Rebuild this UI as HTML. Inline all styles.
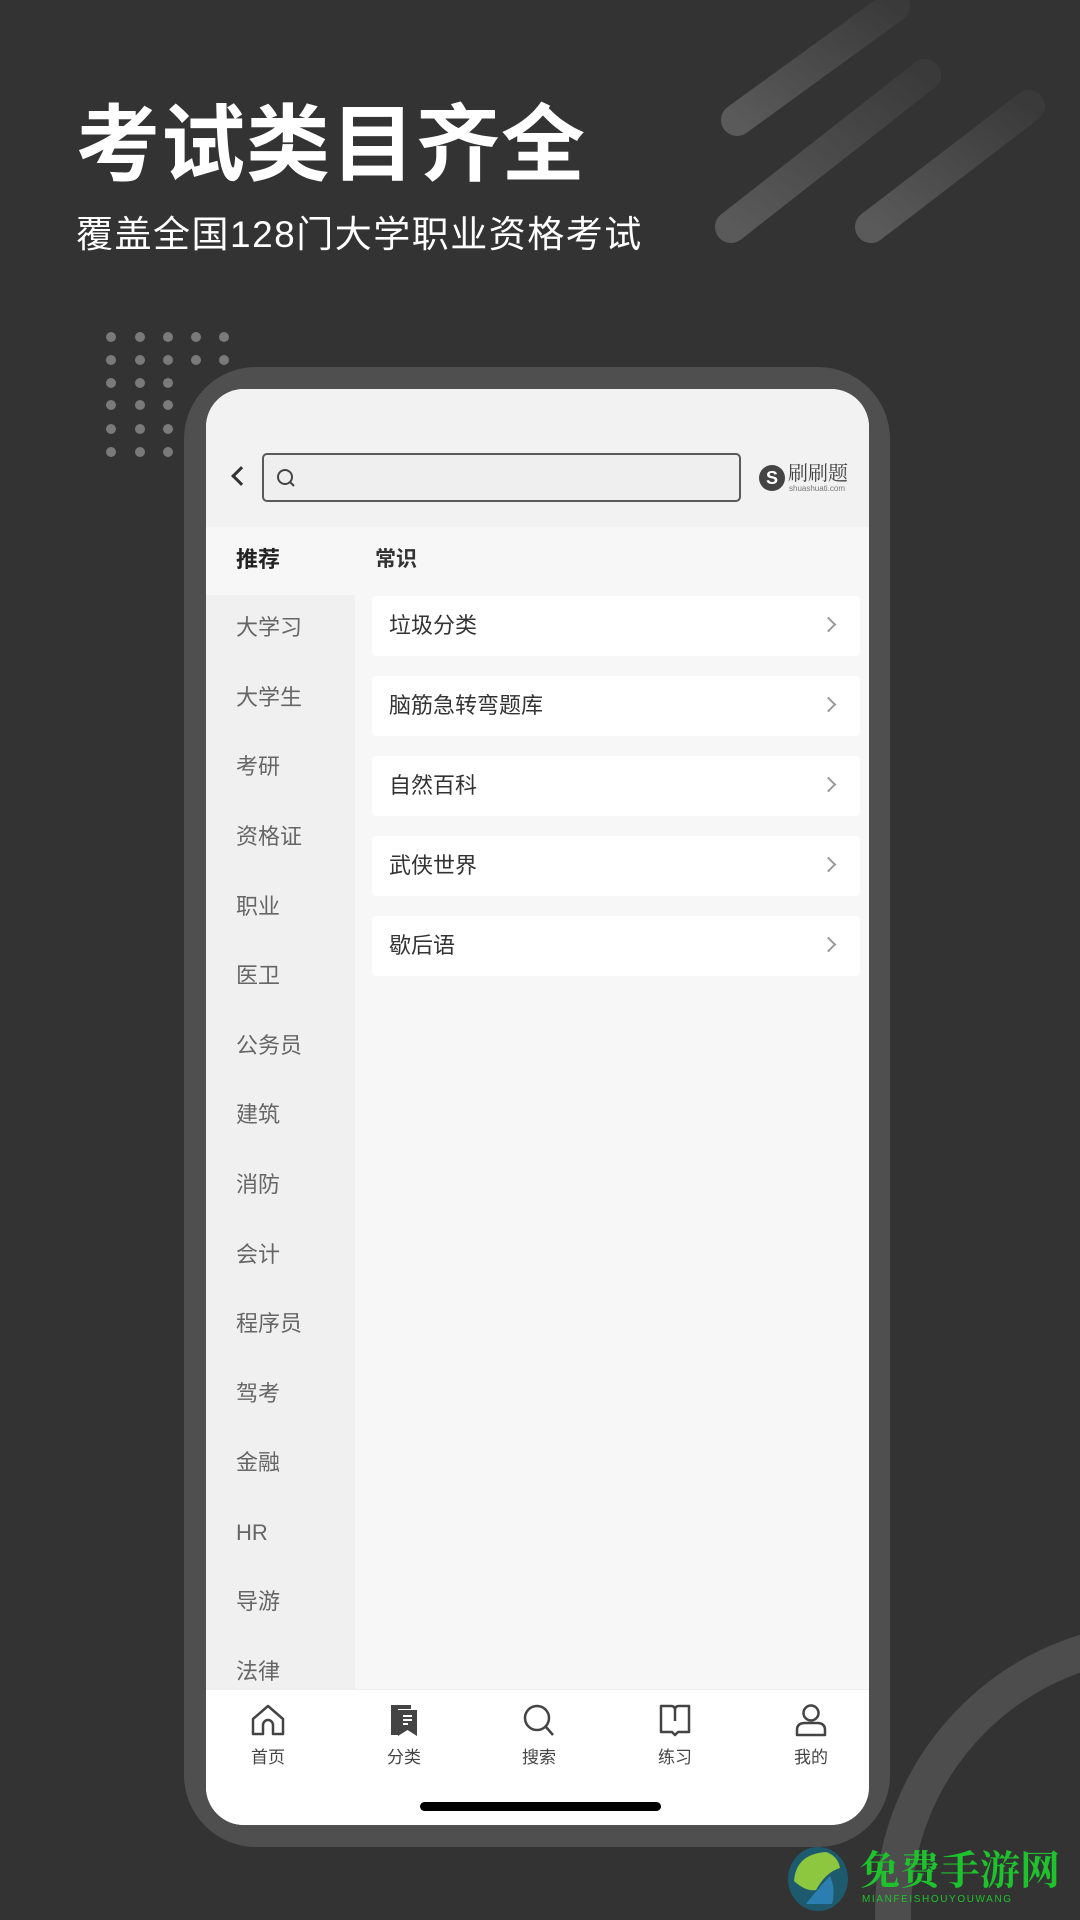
<!DOCTYPE html>
<html><head><meta charset="utf-8"><style>
*{margin:0;padding:0;box-sizing:border-box}
html,body{width:1080px;height:1920px;overflow:hidden}
body{background:#333;position:relative;font-family:"Liberation Sans","Noto Sans CJK SC",sans-serif}
.a{position:absolute}
.dot{position:absolute;width:10px;height:10px;border-radius:50%;background:#7a7a7a}
.side{position:absolute;left:30px;font-size:22px;color:#666;line-height:30px}
.card{position:absolute;left:166px;width:488px;height:60px;background:#fff;border-radius:4px}
.card span{position:absolute;left:17px;top:15px;font-size:22px;color:#333;line-height:30px}
.card i{position:absolute;right:26px;top:23px;width:11px;height:11px;border-top:2px solid #999;border-right:2px solid #999;transform:rotate(45deg)}
.tab{position:absolute;top:1703px;width:80px;margin-left:-40px;text-align:center;font-size:17px;color:#444}
.tab svg{display:block;margin:0 auto 6px}
</style></head><body>
<svg class="a" style="left:0;top:0" width="1080" height="1920">
<defs><linearGradient id="g" x1="0" y1="1" x2="1" y2="0"><stop offset="0" stop-color="#5a5a5a"/><stop offset="1" stop-color="#3a3a3a"/></linearGradient></defs>
<g stroke="url(#g)" stroke-width="32" stroke-linecap="round">
<line x1="737" y1="120" x2="894" y2="6"/>
<line x1="731" y1="227" x2="925" y2="75"/>
<line x1="871" y1="227" x2="1029" y2="106"/>
</g>
<circle cx="1165" cy="1912" r="272" fill="none" stroke="#4d4d4d" stroke-width="36"/>
</svg>
<div class="a" style="left:76px;top:100px;font-size:84px;font-weight:bold;color:#fff;line-height:90px;letter-spacing:1px">考试类目齐全</div>
<div class="a" style="left:76px;top:214px;font-size:37px;color:#fff;line-height:42px;letter-spacing:1.5px">覆盖全国128门大学职业资格考试</div>
<div class="dot" style="left:106px;top:332px"></div><div class="dot" style="left:135px;top:332px"></div><div class="dot" style="left:163px;top:332px"></div><div class="dot" style="left:191px;top:332px"></div><div class="dot" style="left:219px;top:332px"></div>
<div class="dot" style="left:106px;top:355px"></div><div class="dot" style="left:135px;top:355px"></div><div class="dot" style="left:163px;top:355px"></div><div class="dot" style="left:191px;top:355px"></div><div class="dot" style="left:219px;top:355px"></div>
<div class="dot" style="left:106px;top:378px"></div><div class="dot" style="left:135px;top:378px"></div><div class="dot" style="left:163px;top:378px"></div>
<div class="dot" style="left:106px;top:400px"></div><div class="dot" style="left:135px;top:400px"></div><div class="dot" style="left:163px;top:400px"></div>
<div class="dot" style="left:106px;top:424px"></div><div class="dot" style="left:135px;top:424px"></div><div class="dot" style="left:163px;top:424px"></div>
<div class="dot" style="left:106px;top:447px"></div><div class="dot" style="left:135px;top:447px"></div><div class="dot" style="left:163px;top:447px"></div>

<div class="a" style="left:184px;top:367px;width:706px;height:1480px;background:#4f4f4f;border-radius:72px"></div>
<div class="a" style="left:206px;top:389px;width:663px;height:1436px;background:#f7f7f7;border-radius:38px;overflow:hidden">
  <div class="a" style="left:0;top:0;width:663px;height:138px;background:#f2f2f2"></div>
  <div class="a" style="left:28px;top:80px;width:14px;height:14px;border-left:3px solid #333;border-bottom:3px solid #333;transform:rotate(45deg)"></div>
  <div class="a" style="left:56px;top:64px;width:479px;height:49px;border:2px solid #5a5a5a;border-radius:5px;background:#efefef"></div>
  <svg class="a" style="left:69px;top:78px" width="22" height="22"><circle cx="10" cy="10" r="7" fill="none" stroke="#444" stroke-width="2"/><line x1="15" y1="15" x2="19" y2="19" stroke="#444" stroke-width="2"/></svg>
  <div class="a" style="left:553px;top:76px;width:26px;height:26px;border-radius:50%;background:#444;color:#fff;font-size:18px;font-weight:bold;text-align:center;line-height:26px">S</div>
  <div class="a" style="left:582px;top:71px;font-size:20px;color:#444;font-family:'Noto Serif CJK SC',serif;line-height:24px">刷刷题</div>
  <div class="a" style="left:583px;top:95px;font-size:8px;color:#777">shuashuati.com</div>

  <div class="a" style="left:0;top:138px;width:149px;height:1298px;background:#f0f0f0"></div>
  <div class="a" style="left:0;top:138px;width:149px;height:68px;background:#f7f7f7"></div>
  <div class="side" style="top:156px;color:#222;font-weight:bold">推荐</div>
  <div class="side" style="top:224px">大学习</div>
  <div class="side" style="top:294px">大学生</div>
  <div class="side" style="top:363px">考研</div>
  <div class="side" style="top:433px">资格证</div>
  <div class="side" style="top:503px">职业</div>
  <div class="side" style="top:572px">医卫</div>
  <div class="side" style="top:642px">公务员</div>
  <div class="side" style="top:711px">建筑</div>
  <div class="side" style="top:781px">消防</div>
  <div class="side" style="top:851px">会计</div>
  <div class="side" style="top:920px">程序员</div>
  <div class="side" style="top:990px">驾考</div>
  <div class="side" style="top:1059px">金融</div>
  <div class="side" style="top:1129px">HR</div>
  <div class="side" style="top:1198px">导游</div>
  <div class="side" style="top:1268px">法律</div>

  <div class="a" style="left:169px;top:156px;font-size:21px;color:#333;font-weight:bold;line-height:30px">常识</div>
  <div class="card" style="top:207px"><span>垃圾分类</span><i></i></div>
  <div class="card" style="top:287px"><span>脑筋急转弯题库</span><i></i></div>
  <div class="card" style="top:367px"><span>自然百科</span><i></i></div>
  <div class="card" style="top:447px"><span>武侠世界</span><i></i></div>
  <div class="card" style="top:527px"><span>歇后语</span><i></i></div>

  <div class="a" style="left:0;top:1300px;width:663px;height:136px;background:#fff;border-top:1px solid #eee"></div>
  <div class="a" style="left:214px;top:1413px;width:241px;height:9px;background:#000;border-radius:5px"></div>
</div>
<div class="tab" style="left:268px"><svg width="36" height="34"><path d="M3 16 L18 3 L33 16 V31 H23 V22 a5 5 0 0 0 -10 0 V31 H3 Z" fill="none" stroke="#444" stroke-width="2.5" stroke-linejoin="round"/></svg>首页</div>
<div class="tab" style="left:404px"><svg width="36" height="34"><path d="M5 2 H25 V6 H12 V32 L5 32 Z" fill="#444"/><path d="M12 7 H31 V33 L21.5 27 L12 33 Z" fill="#444"/><path d="M17 13h9M17 17h9M17 21h5" stroke="#fff" stroke-width="2"/></svg>分类</div>
<div class="tab" style="left:539px"><svg width="36" height="34"><circle cx="16" cy="15" r="12" fill="none" stroke="#444" stroke-width="2.5"/><line x1="25" y1="24" x2="32" y2="32" stroke="#444" stroke-width="2.5"/></svg>搜索</div>
<div class="tab" style="left:675px"><svg width="36" height="34"><path d="M4 3 H14 Q18 3 18 7 Q18 3 22 3 H32 V29 H21 L18 32 L15 29 H4 Z" fill="none" stroke="#444" stroke-width="2.5" stroke-linejoin="round"/><line x1="18" y1="7" x2="18" y2="18" stroke="#444" stroke-width="2.5"/></svg>练习</div>
<div class="tab" style="left:811px"><svg width="36" height="34"><circle cx="18" cy="10" r="7.5" fill="none" stroke="#444" stroke-width="2.5"/><path d="M4 32 V27 Q4 20 12 20 H24 Q32 20 32 27 V32 Z" fill="none" stroke="#444" stroke-width="2.5" stroke-linejoin="round"/></svg>我的</div>

<svg class="a" style="left:786px;top:1846px" width="64" height="66"><ellipse cx="32" cy="33" rx="30" ry="32" fill="#1d5a6e"/><path d="M8 35 Q10 8 40 6 Q52 10 54 22 Q40 26 30 44 Q20 46 8 35Z" fill="#8dc63f"/><path d="M20 58 Q34 40 44 30 Q50 44 46 58 Z" fill="#2b7fb0"/></svg>
<div class="a" style="left:860px;top:1845px;font-size:40px;font-weight:bold;color:#1ec22c;line-height:46px;font-family:'Noto Serif CJK SC',serif">免费手游网</div>
<div class="a" style="left:862px;top:1894px;font-size:10px;line-height:12px;color:#1ec22c;letter-spacing:1.6px">MIANFEISHOUYOUWANG</div>
</body></html>
